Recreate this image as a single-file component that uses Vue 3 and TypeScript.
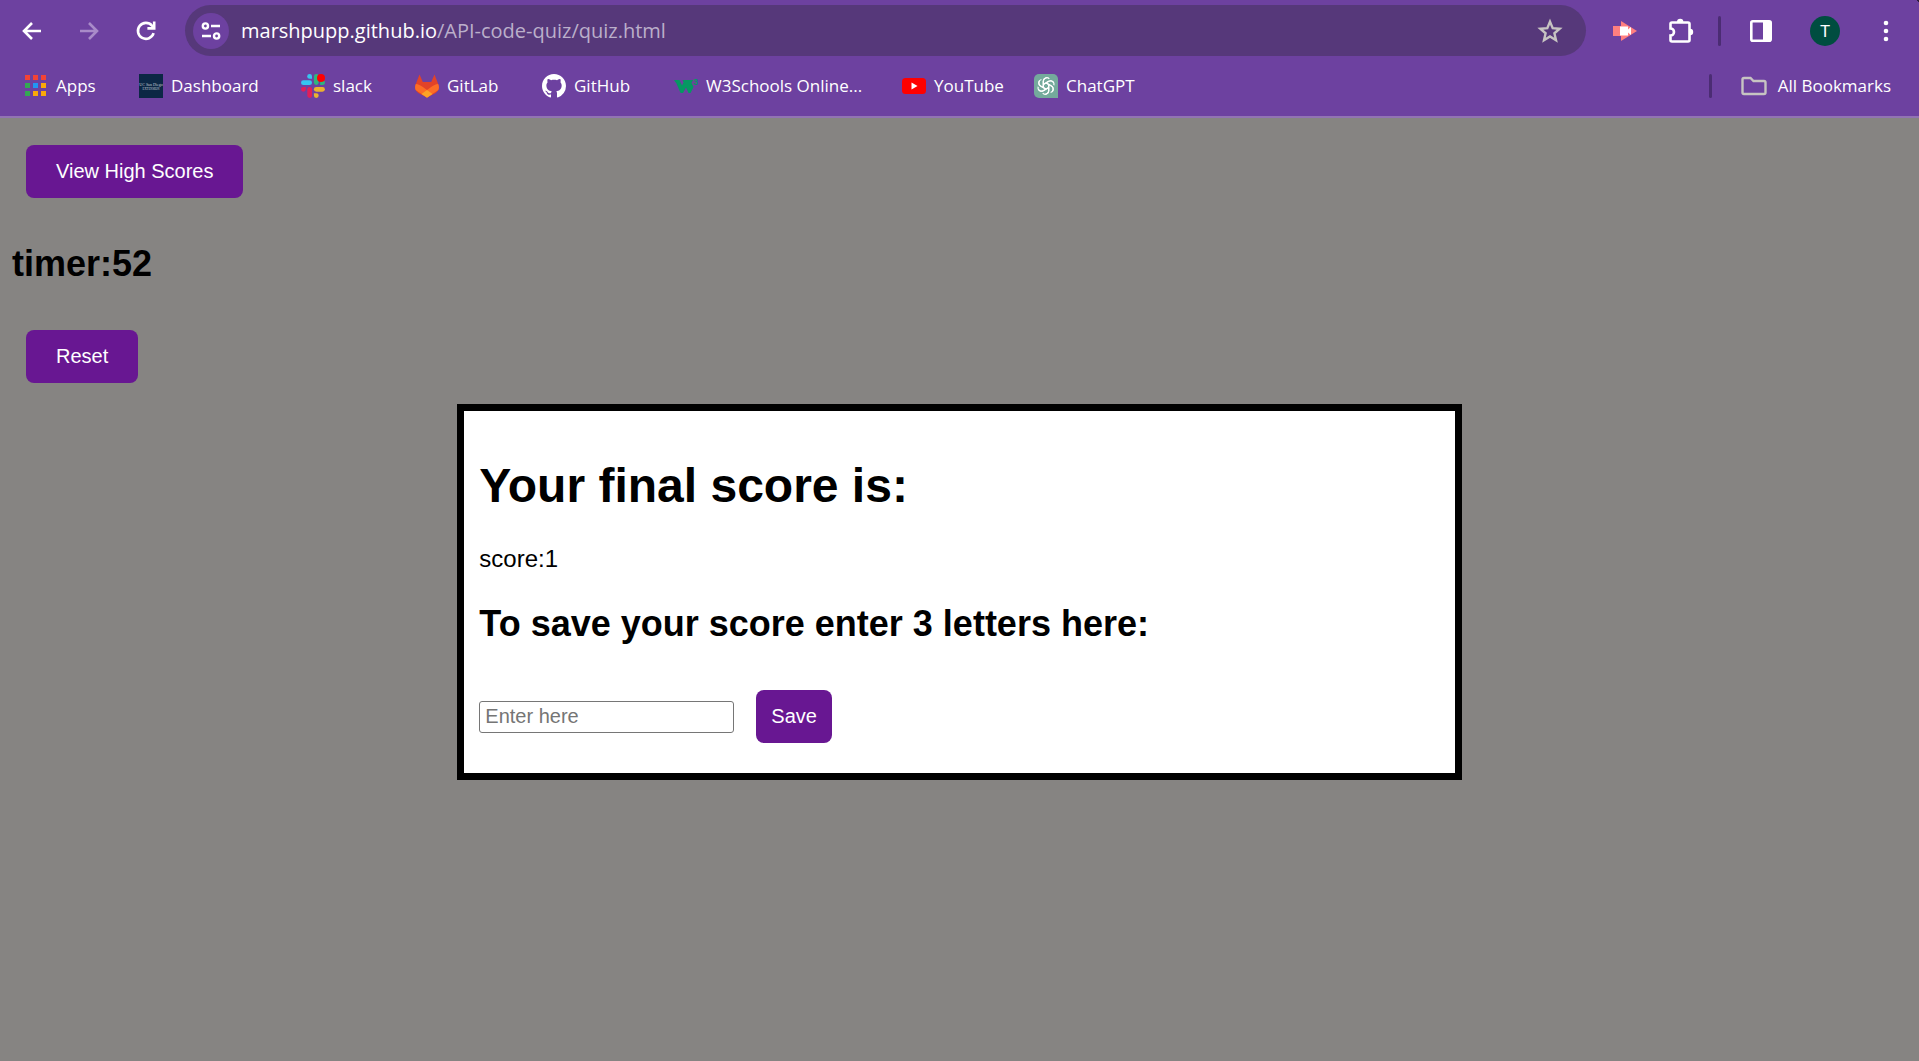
<script setup lang="ts">
import { ref } from 'vue'

interface Bookmark {
  label: string
  icon: string
}

const bookmarks: Bookmark[] = [
  { label: 'Apps', icon: 'apps' },
  { label: 'Dashboard', icon: 'dashboard' },
  { label: 'slack', icon: 'slack' },
  { label: 'GitLab', icon: 'gitlab' },
  { label: 'GitHub', icon: 'github' },
  { label: 'W3Schools Online...', icon: 'w3' },
  { label: 'YouTube', icon: 'youtube' },
  { label: 'ChatGPT', icon: 'chatgpt' },
]

const appColors = ['#f44336', '#f44336', '#f44336', '#34a853', '#2196f3', '#fba90a', '#34a853', '#fba90a', '#fba90a']
const petals = [0, 60, 120, 180, 240, 300]

const timer = ref(52)
const score = ref(1)
const initials = ref('')
</script>

<template>
  <div class="window">
    <header class="chrome">
      <div class="toolbar">
        <nav class="nav">
          <button class="tool" aria-label="Back">
            <svg width="20" height="20" viewBox="0 0 20 20" fill="none" stroke="#fff" stroke-width="2.6"><path d="M19 10H3M10 2L2 10l8 8" /></svg>
          </button>
          <button class="tool" aria-label="Forward">
            <svg width="20" height="20" viewBox="0 0 20 20" fill="none" stroke="#a98bc9" stroke-width="2.6"><path d="M1 10h16M10 2l8 8-8 8" /></svg>
          </button>
          <button class="tool" aria-label="Reload">
            <svg width="22" height="22" viewBox="0 0 22 22" fill="none" stroke="#fff" stroke-width="2.6"><path d="M18.6 13.2A8 8 0 1 1 17 5.6L19.2 8" /><path d="M19.2 1.6V8.4H12.4" /></svg>
          </button>
        </nav>
        <div class="omnibox">
          <button class="site-info" aria-label="Site information">
            <svg width="20" height="20" viewBox="0 0 20 20" fill="none" stroke="#fff" stroke-width="2.4"><circle cx="4.4" cy="5" r="2.6" /><path d="M10 5h9M1 15h9" /><circle cx="15.6" cy="15" r="2.6" /></svg>
          </button>
          <span class="url">marshpupp.github.io<span class="path">/API-code-quiz/quiz.html</span></span>
          <button class="star" aria-label="Bookmark this tab">
            <svg width="26" height="26" viewBox="0 0 26 26" fill="none" stroke="#c7c4c2" stroke-width="2.4"><path d="M13 3.6l2.7 6.5 7 .6-5.3 4.6 1.6 6.9-6-3.7-6 3.7 1.6-6.9-5.3-4.6 7-.6z" /></svg>
          </button>
        </div>
        <div class="actions">
          <button class="tool" aria-label="Screen recorder">
            <svg width="24" height="20" viewBox="0 0 24 20"><path d="M0 5h8v10H0z" fill="#ff7f7f" /><path d="M8 0l16 10L8 20z" fill="#ff7f7f" /><path d="M7 5.5h8v3l3-2.5v8l-3-2.5v3H7z" fill="#fff" /></svg>
          </button>
          <button class="tool" aria-label="Extensions">
            <svg width="26" height="26" viewBox="0 0 26 26"><path d="M4 4.5h16A1.5 1.5 0 0 1 21.5 6v16a1.5 1.5 0 0 1-1.5 1.5H4A1.5 1.5 0 0 1 2.5 22v-4.5a3.5 3.5 0 0 0 0-7V6A1.5 1.5 0 0 1 4 4.5z" fill="none" stroke="#fff" stroke-width="2.6" /><path d="M9 4a3.2 3.2 0 0 1 6.4 0zM22 10.8a3.2 3.2 0 0 1 0 6.4z" fill="#fff" /></svg>
          </button>
          <span class="divider tall"></span>
          <button class="tool panel" aria-label="Side panel">
            <svg width="22" height="22" viewBox="0 0 22 22"><rect x="1.3" y="1.3" width="19.4" height="19.4" rx="1.5" fill="none" stroke="#fff" stroke-width="2.6" /><path d="M13 1h8v20h-8z" fill="#fff" /></svg>
          </button>
          <button class="tool profile" aria-label="Profile"><span class="avatar">T</span></button>
          <button class="tool menu" aria-label="Menu">
            <svg width="6" height="22" viewBox="0 0 6 22" fill="#fff"><circle cx="3" cy="3" r="2.3" /><circle cx="3" cy="11" r="2.3" /><circle cx="3" cy="19" r="2.3" /></svg>
          </button>
        </div>
      </div>

      <div class="bookmark-bar">
        <div class="bookmarks">
          <a v-for="b in bookmarks" :key="b.label" class="bookmark" href="#">
            <svg v-if="b.icon === 'apps'" width="24" height="24" viewBox="0 0 24 24">
              <rect v-for="(c, i) in appColors" :key="i" :x="1 + (i % 3) * 8" :y="1 + Math.floor(i / 3) * 8" width="5" height="5" :fill="c" />
            </svg>
            <svg v-else-if="b.icon === 'dashboard'" width="24" height="24" viewBox="0 0 24 24">
              <rect width="24" height="24" fill="#0c2745" />
              <g fill="#c6ced8" text-anchor="middle" font-family="Liberation Serif, serif"><text x="12" y="12" font-size="4">UC San Diego</text><text x="12" y="16" font-size="3">EXTENSION</text></g>
            </svg>
            <svg v-else-if="b.icon === 'slack'" width="24" height="24" viewBox="0 0 24 24">
              <g fill="#36c5f0"><rect x="0" y="6.3" width="11" height="4.8" rx="2.4" /><path d="M8.6 0A2.4 2.4 0 0 1 11 2.4v2.4H8.6a2.4 2.4 0 0 1 0-4.8z" /></g>
              <g fill="#2eb67d"><rect x="12.9" y="0" width="4.8" height="11" rx="2.4" /><path d="M24 8.7a2.4 2.4 0 0 1-2.4 2.4h-2.4V8.7a2.4 2.4 0 0 1 4.8 0z" /></g>
              <g fill="#ecb22e"><rect x="12.9" y="12.9" width="11" height="4.8" rx="2.4" /><path d="M15.3 24a2.4 2.4 0 0 1-2.4-2.4v-2.4h2.4a2.4 2.4 0 0 1 0 4.8z" /></g>
              <g fill="#e01e5a"><rect x="6.3" y="12.9" width="4.8" height="11" rx="2.4" /><path d="M0 15.3a2.4 2.4 0 0 1 2.4-2.4h2.4v2.4a2.4 2.4 0 0 1-4.8 0z" /></g>
              <circle cx="20" cy="4" r="4" fill="#f00" />
            </svg>
            <svg v-else-if="b.icon === 'gitlab'" width="24" height="24" viewBox="0 0 24 24">
              <path d="M4.5.5L7.8 8h8.4l3.3-7.5 3.7 9.5c1.3 3.800.3 6.800-2.400 8.900L12 23.500l-8.800-4.600C.5 16.800-.5 13.800.8 10z" fill="#e24329" />
              <path d="M12 23.5L.6 16C-.2 14-.1 12 .8 10c2.500.3 4.700 1.300 6.700 2.800L12 16l4.500-3.200c2-1.500 4.200-2.500 6.700-2.800.9 2 1 4 .2 6z" fill="#fc6d26" />
              <path d="M12 16l5.500 4L12 23.700 6.500 20z" fill="#fca326" />
            </svg>
            <svg v-else-if="b.icon === 'github'" width="24" height="24" viewBox="0 0 16 16">
              <path fill="#fff" d="M8 0C3.58 0 0 3.58 0 8c0 3.54 2.29 6.53 5.47 7.59.4.07.55-.17.55-.38 0-.19-.01-.82-.01-1.49-2.01.37-2.53-.49-2.69-.94-.09-.23-.48-.94-.82-1.13-.28-.15-.68-.52-.01-.53.63-.01 1.08.58 1.23.82.72 1.21 1.87.87 2.33.66.07-.52.28-.87.51-1.07-1.78-.2-3.64-.89-3.64-3.95 0-.87.31-1.59.82-2.15-.08-.2-.36-1.02.08-2.12 0 0 .67-.21 2.2.82.64-.18 1.32-.27 2-.27s1.36.09 2 .27c1.53-1.04 2.2-.82 2.2-.82.44 1.1.16 1.92.08 2.12.51.56.82 1.27.82 2.15 0 3.07-1.87 3.75-3.65 3.95.29.25.54.73.54 1.48 0 1.07-.01 1.93-.01 2.2 0 .21.15.46.55.38A8.01 8.01 0 0 0 16 8c0-4.42-3.58-8-8-8z" />
            </svg>
            <svg v-else-if="b.icon === 'w3'" width="24" height="24" viewBox="0 0 24 24">
              <path d="M0 6h5.500L8 11.500l1.500-3L8.500 6H19l-1.500 3 2 4-3 6h-2L12 13.500 9 19H6.500L2.500 9.500z" fill="#059862" />
              <text x="19" y="11" font-family="Liberation Sans, sans-serif" font-size="9" font-weight="700" fill="#059862">3</text>
            </svg>
            <svg v-else-if="b.icon === 'youtube'" width="24" height="24" viewBox="0 0 24 24">
              <rect y="4" width="24" height="16" rx="3.5" fill="#f00" /><path d="M9.5 8.5l6 3.5-6 3.5z" fill="#fff" />
            </svg>
            <svg v-else width="24" height="24" viewBox="0 0 24 24">
              <path d="M5 0h14a5 5 0 0 1 5 5v19H5a5 5 0 0 1-5-5V5a5 5 0 0 1 5-5z" fill="#74aa9c" />
              <g fill="none" stroke="#fff" stroke-width="1.2" stroke-linejoin="round">
                <path v-for="a in petals" :key="a" :transform="`rotate(${a} 12 12)`" d="M9.300 13.400V7.200A3.500 3.500 0 0 1 15.300 4.800M9.300 10.400l5.400-3.100a3.600 3.600 0 0 1 5 1.500" />
              </g>
            </svg>
            <span>{{ b.label }}</span>
          </a>
        </div>
        <span class="divider"></span>
        <a class="bookmark all" href="#">
          <svg width="26" height="20" viewBox="0 0 26 20" fill="none" stroke="#c7c4c2" stroke-width="2.4"><path d="M3 2h6.5l3 3H23a1.5 1.5 0 0 1 1.5 1.5v10A1.5 1.5 0 0 1 23 18H3a1.5 1.5 0 0 1-1.5-1.5v-13A1.5 1.5 0 0 1 3 2z" /></svg>
          <span>All Bookmarks</span>
        </a>
      </div>
    </header>

    <main class="page">
      <button class="btn side">View High Scores</button>
      <h2 class="timer">timer:{{ timer }}</h2>
      <button class="btn side">Reset</button>

      <form class="result" @submit.prevent>
        <h1>Your final score is:</h1>
        <p>score:{{ score }}</p>
        <h2><label for="initials">To save your score enter 3 letters here:</label></h2>
        <div class="entry">
          <input id="initials" v-model="initials" type="text" placeholder="Enter here" />
          <button class="btn save" type="submit">Save</button>
        </div>
      </form>
    </main>
  </div>
</template>

<style>
body {
  margin: 0;
  background: #868482;
}
</style>

<style scoped>
.window {
  min-height: 100vh;
  display: flex;
  flex-direction: column;
  background: #868482;
}

.window svg {
  display: block;
  flex: none;
}

.chrome {
  background: radial-gradient(circle at 100% 0, #2b1d3d 0 2px, transparent 2px) #6d41a0;
  border-bottom: 2px solid #9273b3;
  color: #fff;
  font-family: "Open Sans", "Noto Sans", sans-serif;
}

.toolbar {
  display: flex;
  align-items: center;
  padding: 5px 5px 5px 4px;
}

.nav,
.actions {
  display: flex;
  align-items: center;
}

.chrome button {
  display: flex;
  align-items: center;
  justify-content: center;
  padding: 0;
  border: 0;
  background: none;
  color: inherit;
  font: inherit;
}

.chrome .tool {
  width: 56px;
  height: 50px;
}

.nav {
  gap: 1px;
}

.omnibox {
  flex: 1;
  display: flex;
  align-items: center;
  height: 51px;
  margin: 0 11px;
  padding: 0 23px 0 8px;
  border-radius: 26px;
  background: #56387a;
}

.chrome .site-info {
  width: 36px;
  height: 36px;
  border-radius: 50%;
  background: #6d41a0;
}

.url {
  flex: 1;
  margin-left: 12px;
  font-size: 20px;
  line-height: 28px;
}

.path {
  color: #bbafca;
}

.divider {
  width: 3px;
  height: 24px;
  border-radius: 2px;
  background: #4b2c73;
}

.divider.tall {
  height: 30px;
  margin: 0 12px 0 9px;
}

.profile {
  margin: 0 5px 0 8px;
}

.avatar {
  width: 30px;
  border-radius: 50%;
  background: #004d40;
  font-family: Roboto, sans-serif;
  font-size: 17px;
  line-height: 30px;
  text-align: center;
}

.bookmark-bar {
  display: flex;
  align-items: center;
  height: 50px;
  padding: 0 28px 5px 24px;
}

.bookmarks {
  flex: 1;
  display: grid;
  grid-template-columns: 115px 162px 114px 127px 132px 228px 132px auto;
}

.bookmark {
  display: flex;
  align-items: center;
  gap: 8px;
  color: #fff;
  font-size: 17px;
  line-height: 24px;
  text-decoration: none;
  white-space: nowrap;
}

.bookmark.all {
  gap: 11px;
  margin-left: 29px;
}

.page {
  flex: 1;
  display: flex;
  flex-direction: column;
  align-items: flex-start;
  padding: 27px 12px 12px;
  color: #000;
  font-family: "Liberation Sans", Arial, sans-serif;
  font-size: 24px;
  line-height: 28px;
}

h1,
h2,
p {
  margin: 0;
}

h1 {
  font-size: 48px;
  line-height: 56px;
}

h2 {
  font-size: 36px;
  line-height: 42px;
}

.btn {
  padding: 15px 30px;
  border: 0;
  border-radius: 8px;
  background: #681792;
  color: #fff;
  font-family: inherit;
  font-size: 20px;
  line-height: 23px;
}

.side {
  margin: 0 14px;
}

.timer {
  margin: 45px 0;
}

.result {
  box-sizing: border-box;
  width: 53%;
  margin-top: 21px;
  padding: 47px 15px 30px;
  border: 7px solid #000;
  align-self: center;
  background: #fff;
}

.result p {
  margin: 31px 0 30px;
}

.entry {
  display: flex;
  align-items: center;
  gap: 22px;
  margin-top: 45px;
}

.entry input {
  box-sizing: border-box;
  width: 255px;
  height: 32px;
  padding: 0 5px;
  border: 1px solid #767676;
  border-radius: 3px;
  background: #fff;
  font-family: inherit;
  font-size: 20px;
}

.entry input::placeholder {
  color: #757575;
}

.save {
  padding: 15px;
}
</style>
